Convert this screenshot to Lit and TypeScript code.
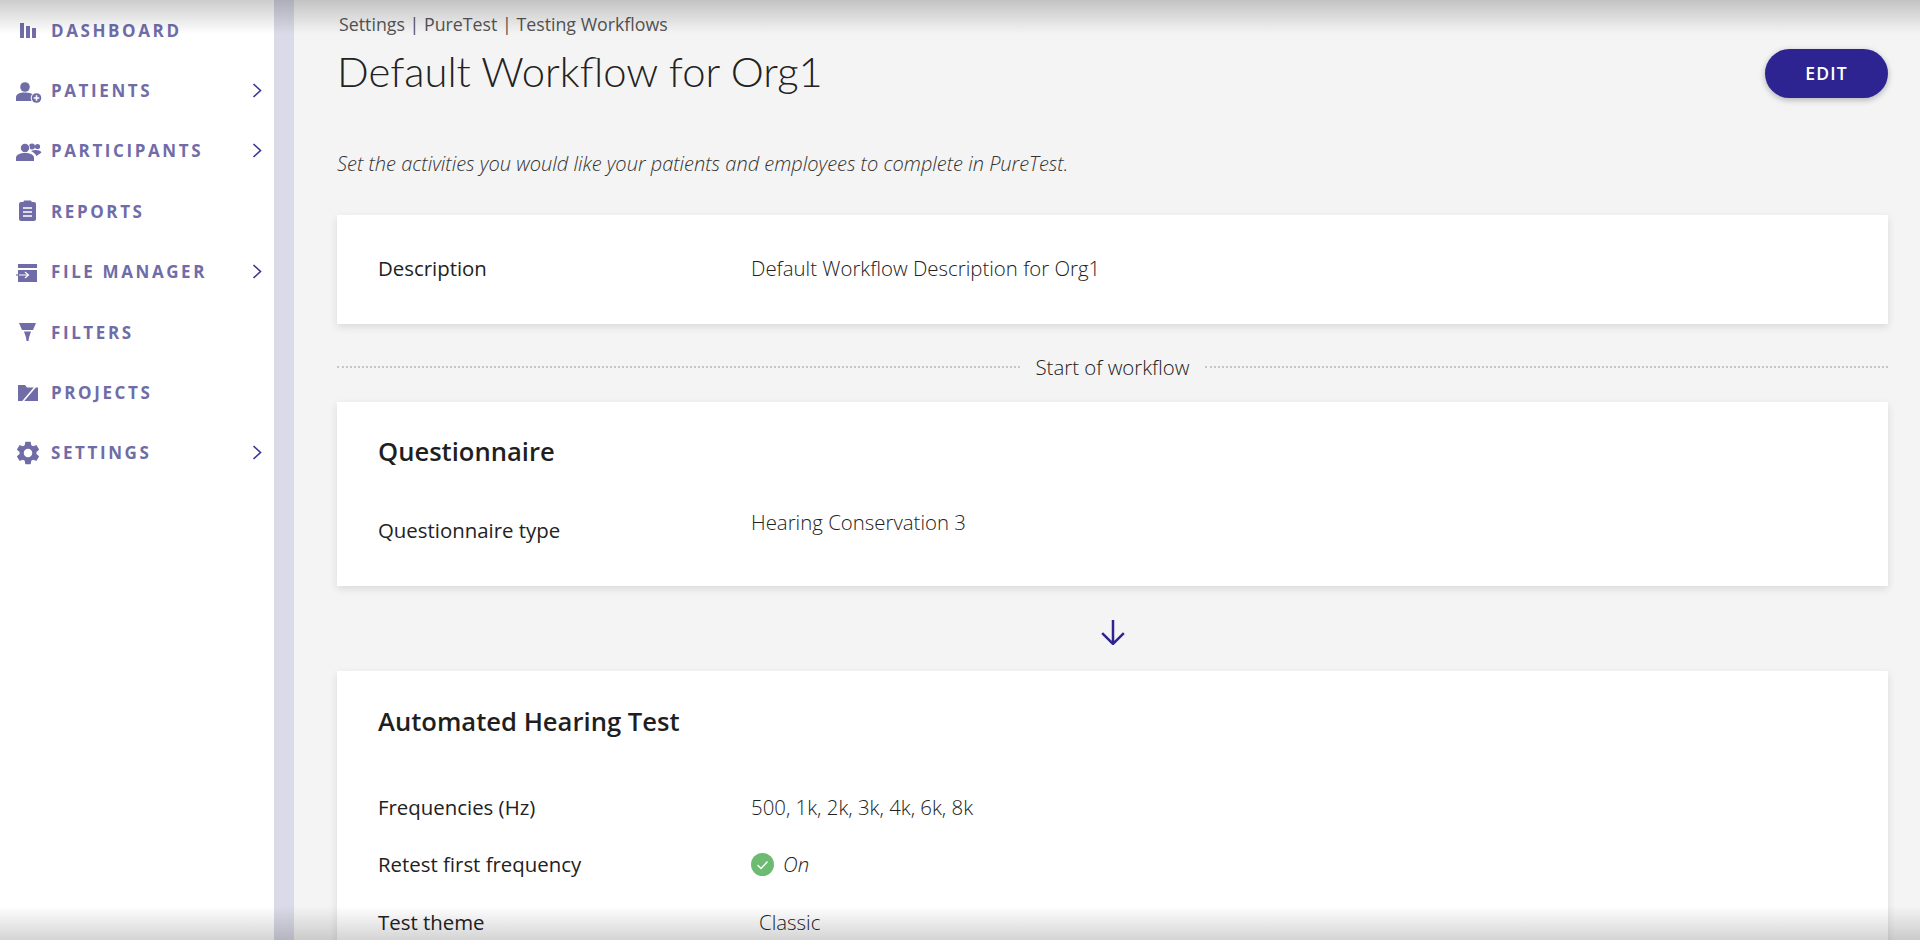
import { css, html, svg, LitElement } from 'lit';
import { customElement } from 'lit/decorators.js';

// Sidebar icons, all drawn in a 26x24 box.
const icons = {
  dashboard: svg`<path d="M4 5h4v15H4zM10 8h4v12h-4zM16 10h4v10h-4z" />`,
  patients: svg`
    <circle cx="9" cy="8" r="4.800" />
    <path d="M0 22v-3.500C0 15 3 13.500 9 13.500c4 0 6.500.8 8 2.200V22z" />
    <circle cx="20.500" cy="19" r="5.800" fill="#fff" />
    <circle cx="20.500" cy="19" r="4.800" />
    <path d="M20.500 16.200v5.600M17.700 19h5.600" stroke="#fff" stroke-width="1.600" fill="none" />`,
  participants: svg`
    <circle cx="16" cy="7.500" r="3" />
    <circle cx="21.500" cy="7.500" r="2.600" />
    <path d="M15 12c4-1.500 8.500-1.500 10.500 1.500l-5 3.500c-1-2-3-4-5.500-5z" />
    <circle cx="9" cy="9" r="4.200" fill="#fff" stroke="#fff" stroke-width="1.500" />
    <circle cx="9" cy="9" r="4.200" />
    <path d="M0 22v-3c0-3.500 4-5 9-5s9 1.500 9 5v3z" />`,
  reports: svg`
    <rect x="3" y="3" width="17" height="19" rx="2" />
    <rect x="7.500" y="1.500" width="8" height="3.500" rx="1" />
    <path d="M7 9h9M7 13h9M7 17h9" stroke="#fff" stroke-width="1.500" fill="none" />`,
  files: svg`
    <path d="M2 4h19v4H2z" />
    <path d="M2 10h19v12H2z" />
    <path d="M0 15h3" stroke="#6f6ca8" stroke-width="1.200" fill="none" />
    <path d="M3 15h9M9 12l3.500 3-3.500 3" stroke="#fff" stroke-width="1.200" fill="none" />`,
  filters: svg`
    <path d="M3 3h17l-3 7H6z" />
    <path d="M8 11.500h7l-2 6-.5 3.500h-2l-.5-3.500z" />`,
  projects: svg`
    <path d="M2 4h7l2 2.500h11V20H2z" />
    <path d="M6 21.500L20 5" stroke="#fff" stroke-width="1.600" fill="none" />`,
  settings: svg`
    <path transform="translate(12 12) scale(1.180) translate(-12 -12)" d="M19.14 12.94c.04-.3.06-.61.06-.94 0-.32-.02-.64-.07-.94l2.03-1.58c.18-.14.23-.41.12-.61l-1.92-3.32c-.12-.22-.37-.29-.59-.22l-2.39.96c-.5-.38-1.03-.7-1.62-.94l-.36-2.54c-.04-.24-.24-.41-.48-.41h-3.84c-.24 0-.43.17-.47.41l-.36 2.54c-.59.24-1.13.57-1.62.94l-2.39-.96c-.22-.08-.47 0-.59.22L2.74 8.87c-.12.21-.08.47.12.61l2.03 1.58c-.05.3-.09.63-.09.94s.02.64.07.94l-2.03 1.58c-.18.14-.23.41-.12.61l1.92 3.32c.12.22.37.29.59.22l2.39-.96c.5.38 1.03.7 1.62.94l.36 2.54c.05.24.24.41.48.41h3.84c.24 0 .44-.17.47-.41l.36-2.54c.59-.24 1.13-.56 1.62-.94l2.39.96c.22.08.47 0 .59-.22l1.92-3.32c.12-.22.07-.47-.12-.61l-2.01-1.58zM12 15.600c-1.980 0-3.600-1.620-3.600-3.600s1.620-3.600 3.600-3.600 3.600 1.620 3.600 3.600-1.620 3.600-3.600 3.600z" />`,
};

const navItems = [
  { label: 'DASHBOARD', icon: icons.dashboard, more: false },
  { label: 'PATIENTS', icon: icons.patients, more: true },
  { label: 'PARTICIPANTS', icon: icons.participants, more: true },
  { label: 'REPORTS', icon: icons.reports, more: false },
  { label: 'FILE MANAGER', icon: icons.files, more: true },
  { label: 'FILTERS', icon: icons.filters, more: false },
  { label: 'PROJECTS', icon: icons.projects, more: false },
  { label: 'SETTINGS', icon: icons.settings, more: true },
];

@customElement('app-root')
export class AppRoot extends LitElement {
  static styles = css`
    :host {
      display: flex;
      position: relative;
      height: 940px;
      overflow: hidden;
      background: #f4f4f4;
      color: #222;
      font-family: 'Open Sans', 'Liberation Sans', sans-serif;
    }

    /* Sidebar */
    .sidebar {
      flex: none;
      width: 274px;
      background: #fff;
      border-right: 20px solid #dadae8;
    }
    .nav-item {
      display: flex;
      align-items: center;
      height: 60.4px;
      padding: 0 12px 0 16px;
      color: #6f6ca8;
      font-size: 17px;
      font-weight: 700;
      letter-spacing: 2.6px;
    }
    .nav-icon {
      flex: none;
      width: 26px;
      height: 24px;
      margin-right: 9px;
      fill: #6f6ca8;
    }
    .nav-label {
      flex: 1;
    }
    .chevron {
      flex: none;
      width: 10px;
      height: 15px;
      fill: none;
      stroke: #3b3595;
      stroke-width: 1.6;
    }

    /* Main column */
    .main {
      flex: 1;
      min-width: 0;
      padding: 13px 32px 0 43px;
    }
    .crumbs {
      height: 22px;
      padding-left: 2px;
      line-height: 22px;
      font-size: 17.8px;
      color: #555;
    }
    .title-row {
      display: flex;
      justify-content: space-between;
      align-items: center;
      margin-top: 13px;
      height: 50px;
    }
    h1 {
      margin: -4px 0 0;
      font-family: Lato, 'Open Sans', sans-serif;
      font-size: 41.8px;
      font-weight: 300;
      color: #222;
    }
    .edit {
      width: 123px;
      height: 49px;
      border: 0;
      border-radius: 25px;
      background: #2e2491;
      box-shadow: 0 2px 6px rgba(0, 0, 0, 0.28);
      color: #fff;
      font-family: inherit;
      font-size: 17.5px;
      font-weight: 600;
      letter-spacing: 1.2px;
    }
    .intro {
      margin: 54px 0 0;
      height: 24px;
      line-height: 24px;
      font-size: 20px;
      font-style: italic;
      font-weight: 300;
      color: #333;
    }

    /* Cards */
    .card {
      margin: 0;
      padding: 0 41px;
      background: #fff;
      box-shadow: 0 3px 8px rgba(0, 0, 0, 0.11);
    }
    .card-desc {
      margin-top: 39px;
      height: 109px;
      box-sizing: border-box;
      padding-bottom: 4px;
      display: flex;
      align-items: center;
    }
    .card-quest {
      height: 184px;
      padding-top: 32px;
      box-sizing: border-box;
    }
    .card-test {
      height: 300px;
      padding-top: 33px;
      box-sizing: border-box;
    }
    h2 {
      margin: 0;
      height: 36px;
      line-height: 36px;
      font-size: 25.6px;
      font-weight: 600;
      color: #1f1f1f;
    }
    .row {
      display: grid;
      grid-template-columns: 373px 1fr;
      width: 100%;
      line-height: 26px;
      font-size: 20.4px;
    }
    .label {
      color: #222;
    }
    .value {
      font-weight: 300;
      color: #222;
    }
    .card-quest .row {
      margin-top: 39px;
    }
    .card-quest .label {
      padding-top: 8px;
    }
    .card-test .row {
      height: 57.5px;
    }
    .card-test h2 + .row {
      margin-top: 53.5px;
    }
    .theme {
      padding-left: 8px;
    }
    .status {
      display: flex;
      align-items: center;
      align-self: start;
      height: 26px;
      gap: 9px;
    }
    .status svg {
      width: 23px;
      height: 23px;
    }
    .status span {
      font-style: italic;
    }

    /* Connectors between cards */
    .start {
      display: flex;
      align-items: center;
      gap: 15px;
      height: 78px;
      padding-top: 8px;
      box-sizing: border-box;
      font-size: 20.4px;
      font-weight: 300;
      color: #222;
    }
    .start i {
      flex: 1;
      border-top: 2px dotted #c6c6c6;
    }
    .next {
      display: flex;
      justify-content: center;
      align-items: center;
      height: 85px;
      padding-top: 7px;
      box-sizing: border-box;
    }
    .next svg {
      width: 26px;
      height: 26px;
      fill: none;
      stroke: #2e2491;
      stroke-width: 2.3;
    }

    /* Shade along the top and bottom of the window */
    .shade {
      position: absolute;
      left: 0;
      right: 0;
      height: 34px;
      pointer-events: none;
    }
    .shade-top {
      top: 0;
      background: linear-gradient(rgba(0, 0, 0, 0.2), rgba(0, 0, 0, 0));
    }
    .shade-bottom {
      bottom: 0;
      background: linear-gradient(rgba(0, 0, 0, 0), rgba(0, 0, 0, 0.17));
    }
  `;

  render() {
    return html`
      <nav class="sidebar">
        ${navItems.map(
          (item) => html`
            <div class="nav-item">
              <svg class="nav-icon" viewBox="0 0 26 24">${item.icon}</svg>
              <span class="nav-label">${item.label}</span>
              ${item.more
                ? html`<svg class="chevron" viewBox="0 0 10 15"><path d="M1.500 1l7 6.500-7 6.500" /></svg>`
                : ''}
            </div>
          `,
        )}
      </nav>
      <main class="main">
        <div class="crumbs">Settings | PureTest | Testing Workflows</div>
        <div class="title-row">
          <h1>Default Workflow for Org1</h1>
          <button class="edit">EDIT</button>
        </div>
        <p class="intro">Set the activities you would like your patients and employees to complete in PureTest.</p>

        <section class="card card-desc">
          <div class="row">
            <div class="label">Description</div>
            <div class="value">Default Workflow Description for Org1</div>
          </div>
        </section>

        <div class="start"><i></i><span>Start of workflow</span><i></i></div>

        <section class="card card-quest">
          <h2>Questionnaire</h2>
          <div class="row">
            <div class="label">Questionnaire type</div>
            <div class="value">Hearing Conservation 3</div>
          </div>
        </section>

        <div class="next">
          <svg viewBox="0 0 24 24"><path d="M12 1v22M2 13l10 10 10-10" /></svg>
        </div>

        <section class="card card-test">
          <h2>Automated Hearing Test</h2>
          <div class="row">
            <div class="label">Frequencies (Hz)</div>
            <div class="value">500, 1k, 2k, 3k, 4k, 6k, 8k</div>
          </div>
          <div class="row">
            <div class="label">Retest first frequency</div>
            <div class="value status">
              <svg viewBox="0 0 23 23">
                <circle cx="11.500" cy="11.500" r="11.500" fill="#6dbb73" />
                <path d="M6.500 12l3.500 3.500 6.500-7" fill="none" stroke="#fff" stroke-width="1.300" />
              </svg>
              <span>On</span>
            </div>
          </div>
          <div class="row">
            <div class="label">Test theme</div>
            <div class="value theme">Classic</div>
          </div>
        </section>
      </main>
      <div class="shade shade-top"></div>
      <div class="shade shade-bottom"></div>
    `;
  }
}
